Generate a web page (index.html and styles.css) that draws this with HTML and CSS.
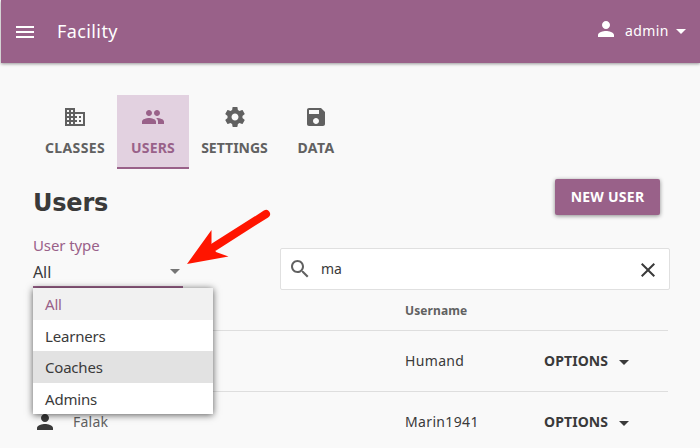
FILE: index.html
```html
<!DOCTYPE html>
<html lang="en">
<head>
<meta charset="utf-8">
<title>Facility</title>
<link rel="stylesheet" href="styles.css">
</head>
<body>
<header class="appbar">
  <svg class="menu-icon" viewBox="0 0 24 24"><path d="M3 18h18v-2H3v2zm0-5h18v-2H3v2zm0-7v2h18V6H3z"/></svg>
  <span class="title">Facility</span>
  <div class="account">
    <svg class="person" viewBox="0 0 24 24"><path d="M12 12c2.21 0 4-1.79 4-4s-1.790-4-4-4-4 1.790-4 4 1.790 4 4 4zm0 2c-2.670 0-8 1.340-8 4v2h16v-2c0-2.660-5.330-4-8-4z"/></svg>
    <span class="account-name">admin</span>
    <svg class="caret" viewBox="0 0 10 5"><path d="M0 0h10L5 5z"/></svg>
  </div>
</header>
<main>
  <nav class="tabs">
    <a class="tab classes"><svg viewBox="0 0 24 24"><path d="M12 7V3H2v18h20V7H12zM6 19H4v-2h2v2zm0-4H4v-2h2v2zm0-4H4V9h2v2zm0-4H4V5h2v2zm4 12H8v-2h2v2zm0-4H8v-2h2v2zm0-4H8V9h2v2zm0-4H8V5h2v2zm10 12h-8v-2h2v-2h-2v-2h2v-2h-2V9h8v10zm-2-8h-2v2h2v-2zm0 4h-2v2h2v-2z"/></svg><span>CLASSES</span></a>
    <a class="tab users active"><svg viewBox="0 0 24 24"><path d="M16 11c1.660 0 2.990-1.340 2.990-3S17.660 5 16 5c-1.660 0-3 1.340-3 3s1.340 3 3 3zm-8 0c1.660 0 2.990-1.340 2.990-3S9.660 5 8 5C6.340 5 5 6.340 5 8s1.340 3 3 3zm0 2c-2.330 0-7 1.170-7 3.500V19h14v-2.500c0-2.330-4.670-3.500-7-3.500zm8 0c-.29 0-.62.02-.97.05 1.160.84 1.970 1.970 1.970 3.450V19h6v-2.500c0-2.330-4.670-3.500-7-3.500z"/></svg><span>USERS</span></a>
    <a class="tab settings"><svg viewBox="0 0 24 24"><path d="M19.430 12.980c.04-.32.07-.64.07-.98s-.03-.66-.07-.98l2.110-1.650c.19-.15.24-.42.12-.64l-2-3.460c-.12-.22-.39-.3-.61-.22l-2.490 1c-.52-.4-1.080-.73-1.690-.98l-.38-2.650C14.460 2.180 14.250 2 14 2h-4c-.25 0-.46.18-.49.42l-.38 2.650c-.61.25-1.170.59-1.690.98l-2.490-1c-.23-.09-.49 0-.61.22l-2 3.460c-.13.22-.07.49.12.64l2.110 1.650c-.04.32-.07.65-.07.98s.03.66.07.98l-2.110 1.650c-.19.15-.24.42-.12.64l2 3.460c.12.22.39.3.61.22l2.490-1c.52.4 1.080.73 1.690.98l.38 2.650c.03.24.24.42.49.42h4c.25 0 .46-.18.49-.42l.38-2.650c.61-.25 1.170-.59 1.690-.98l2.490 1c.23.09.49 0 .61-.22l2-3.460c.12-.22.07-.49-.12-.64l-2.110-1.650zM12 15.500c-1.930 0-3.500-1.570-3.500-3.500s1.570-3.500 3.500-3.500 3.500 1.570 3.500 3.500-1.570 3.500-3.500 3.500z"/></svg><span>SETTINGS</span></a>
    <a class="tab data"><svg viewBox="0 0 24 24"><path d="M17 3H5c-1.110 0-2 .9-2 2v14c0 1.100.89 2 2 2h14c1.100 0 2-.9 2-2V7l-4-4zm-5 16c-1.660 0-3-1.340-3-3s1.340-3 3-3 3 1.340 3 3-1.340 3-3 3zm3-10H5V5h10v4z"/></svg><span>DATA</span></a>
  </nav>
  <div class="heading">
    <h1>Users</h1>
    <button class="new-user">NEW USER</button>
  </div>
  <div class="filters">
    <div class="select">
      <div class="select-label">User type</div>
      <div class="select-value"><span>All</span><svg class="caret" viewBox="0 0 10 5"><path d="M0 0h10L5 5z"/></svg></div>
      <ul class="options">
        <li class="selected">All</li>
        <li>Learners</li>
        <li class="hover">Coaches</li>
        <li>Admins</li>
      </ul>
      <svg class="arrow" viewBox="0 0 90 60"><path d="M79 7 27 40" stroke="#ff1500" stroke-width="8" stroke-linecap="round"/><path d="M0 57 24.500 23V37L29 45 41.500 49.500z" fill="#ff1500"/></svg>
    </div>
    <div class="search">
      <svg class="search-icon" viewBox="0 0 24 24"><path d="M15.500 14h-.79l-.28-.27C15.410 12.590 16 11.110 16 9.500 16 5.910 13.090 3 9.500 3S3 5.910 3 9.500 5.910 16 9.500 16c1.610 0 3.090-.59 4.230-1.570l.27.28v.79l5 4.990L20.490 19l-4.990-5zm-6 0C7.010 14 5 11.990 5 9.500S7.010 5 9.500 5 14 7.010 14 9.500 11.990 14 9.500 14z"/></svg>
      <span class="query">ma</span>
      <svg class="clear" viewBox="0 0 24 24"><path d="M19 6.410L17.590 5 12 10.590 6.410 5 5 6.410 10.590 12 5 17.590 6.410 19 12 13.410 17.590 19 19 17.590 13.410 12z"/></svg>
    </div>
  </div>
  <div class="table">
    <div class="row head"><span></span><span class="username">Username</span><span></span></div>
    <div class="row"><span></span><span class="uname">Humand</span><span class="opt"><b>OPTIONS</b><svg class="caret" viewBox="0 0 10 5"><path d="M0 0h10L5 5z"/></svg></span></div>
    <div class="row last"><span class="name"><svg class="person" viewBox="0 0 24 24"><path d="M12 12c2.210 0 4-1.790 4-4s-1.790-4-4-4-4 1.790-4 4 1.790 4 4 4zm0 2c-2.670 0-8 1.340-8 4v2h16v-2c0-2.660-5.330-4-8-4z"/></svg><span>Falak</span></span><span class="uname">Marin1941</span><span class="opt"><b>OPTIONS</b><svg class="caret" viewBox="0 0 10 5"><path d="M0 0h10L5 5z"/></svg></span></div>
  </div>
</main>
</body>
</html>
```
FILE: styles.css
```css
* { box-sizing: border-box; }
body {
  margin: 0;
  height: 448px;
  overflow: hidden;
  background: #f9f9f9;
  color: #3a3a3a;
  font: 14px/20px "Noto Sans", sans-serif;
}
svg { display: block; fill: currentColor; flex: none; }
.caret { width: 10px; height: 5px; }
.appbar {
  display: flex;
  align-items: center;
  height: 63px;
  margin-left: 1px;
  padding: 0 14px 0 12px;
  background: #996189;
  color: #fff;
  box-shadow: 0 1px 3px rgba(0, 0, 0, .4);
}
.menu-icon { width: 24px; height: 24px; }
.title { margin: -2px 0 0 20px; font-size: 18px; letter-spacing: .4px; }
.account { display: flex; align-items: center; margin-left: auto; }
.account .person { width: 24px; height: 24px; margin: -5px 7px 0 0; }
.account-name { width: 51px; margin-top: -2px; letter-spacing: .4px; }
.account .caret { margin-top: -1px; }
main { padding: 32px 32px 0 33px; }
.tabs { display: flex; height: 74px; }
.tab {
  display: flex;
  flex: none;
  flex-direction: column;
  align-items: center;
  width: 72px;
  padding-top: 10px;
  border-bottom: 2px solid transparent;
  color: #616161;
  font-weight: bold;
}
.tab svg { width: 24px; height: 24px; }
.tab span { margin-top: 9px; }
.classes { width: 84px; letter-spacing: .35px; }
.users { letter-spacing: .2px; }
.settings { width: 91px; }
.data { letter-spacing: .4px; }
.active { background: #e2d1e0; color: #996189; border-color: #996189; }
.heading { display: flex; justify-content: space-between; height: 66px; padding: 10px 8px 0 0; }
h1 { margin: 10px 0 0; font: bold 24px/28px "DejaVu Sans", sans-serif; letter-spacing: -.2px; }
.new-user {
  width: 105px;
  height: 36px;
  padding: 0;
  border: 0;
  border-radius: 2px;
  background: #996189;
  color: #fff;
  font: bold 14px/36px "Noto Sans", sans-serif;
  letter-spacing: .25px;
  box-shadow: 0 1px 4px rgba(0, 0, 0, .45);
}
.filters { display: flex; height: 55px; }
.select { flex: none; position: relative; width: 150px; height: 53px; border-bottom: 2px solid #996189; }
.select-label { color: #996189; font-size: 15px; line-height: 20px; letter-spacing: -.1px; }
.select-value { display: flex; align-items: center; justify-content: space-between; height: 31px; padding: 3px 3px 0 0; font-size: 16px; letter-spacing: -.1px; }
.select-value .caret { margin-top: -1px; color: #757575; }
.options {
  position: absolute;
  z-index: 2;
  top: 53px;
  left: 0;
  width: 180px;
  margin: 0;
  padding: 0;
  list-style: none;
  background: #fff;
  font-size: 15px;
  line-height: 32px;
  letter-spacing: -.2px;
  box-shadow: 0 1px 7px rgba(0, 0, 0, .65);
}
.options li { height: 31.500px; padding-left: 12px; }
.options .selected { background: #f1f1f1; color: #996189; }
.options .hover { background: #e2e2e2; }
.arrow { position: absolute; left: 154px; top: -28px; width: 90px; height: 60px; fill: none; }
.search {
  display: flex;
  flex: none;
  align-items: center;
  width: 390px;
  height: 42px;
  margin: 13px 0 0 97px;
  padding: 0 9px 0 7px;
  border: 1px solid #e0e0e0;
  border-radius: 2px;
  background: #fff;
}
.search-icon { width: 24px; height: 24px; }
.search-icon { color: #616161; }
.query { margin-left: 9px; }
.clear { width: 24px; height: 24px; margin: 2px 0 0 auto; }
.table { width: 635px; }
.row {
  display: grid;
  grid-template-columns: 372px 139px 1fr;
  align-items: center;
  height: 61px;
  border-bottom: 1px solid #dedede;
}
.head { height: 41px; padding-top: 2px; color: #616161; font-size: 12px; font-weight: bold; letter-spacing: .1px; }
.uname { letter-spacing: .35px; }
.last { height: 60px; border-bottom: 0; }
.name { display: flex; align-items: center; }
.name .person { width: 24px; height: 24px; }
.name span { margin-left: 16px; color: #616161; letter-spacing: .25px; }
.opt { display: flex; align-items: center; }
.opt b { letter-spacing: .1px; }
.opt .caret { margin: 3px 0 0 11px; }
```
